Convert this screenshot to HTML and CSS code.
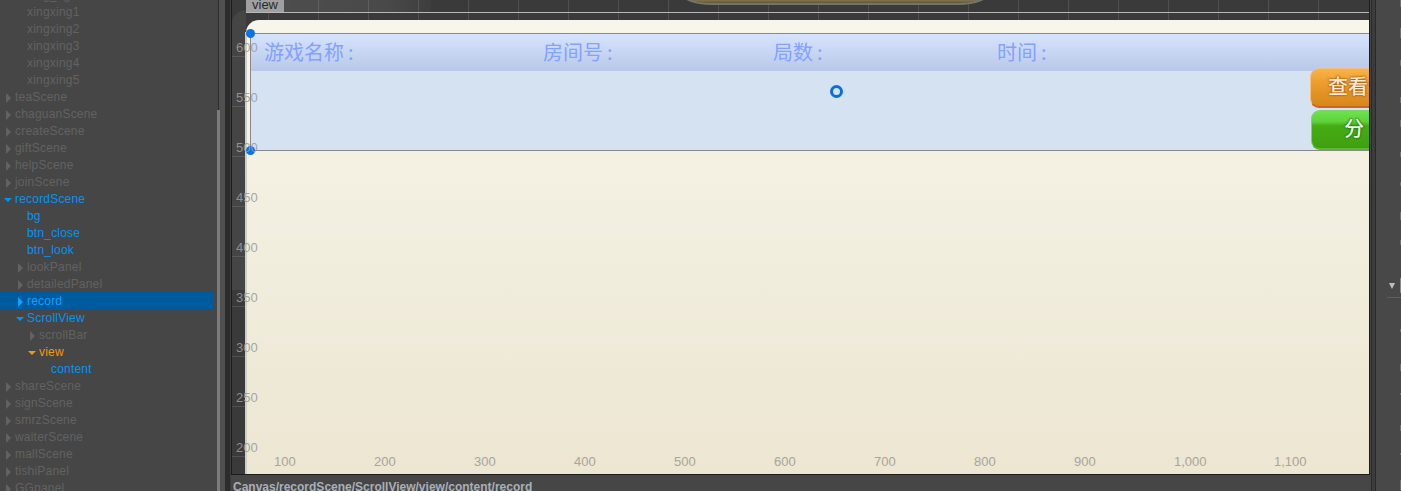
FILE: index.html
```html
<!DOCTYPE html>
<html lang="en">
<head>
  <meta charset="UTF-8" />
  <title>Scene editor</title>
  <link rel="stylesheet" href="styles.css">
</head>
<body>
  <div class="editor">

    <div class="tree-panel">
      <div class="tree">
        <div class="row dim lv1">xing_bg</div>
        <div class="row dim lv1">xingxing1</div>
        <div class="row dim lv1">xingxing2</div>
        <div class="row dim lv1">xingxing3</div>
        <div class="row dim lv1">xingxing4</div>
        <div class="row dim lv1">xingxing5</div>
        <div class="row dim lv0"><i class="arrow closed"></i>teaScene</div>
        <div class="row dim lv0"><i class="arrow closed"></i>chaguanScene</div>
        <div class="row dim lv0"><i class="arrow closed"></i>createScene</div>
        <div class="row dim lv0"><i class="arrow closed"></i>giftScene</div>
        <div class="row dim lv0"><i class="arrow closed"></i>helpScene</div>
        <div class="row dim lv0"><i class="arrow closed"></i>joinScene</div>
        <div class="row blue lv0"><i class="arrow open"></i>recordScene</div>
        <div class="row blue lv1">bg</div>
        <div class="row blue lv1">btn_close</div>
        <div class="row blue lv1">btn_look</div>
        <div class="row dim lv1"><i class="arrow closed"></i>lookPanel</div>
        <div class="row dim lv1"><i class="arrow closed"></i>detailedPanel</div>
        <div class="row blue lv1 selected"><i class="arrow closed"></i>record</div>
        <div class="row blue lv1"><i class="arrow open"></i>ScrollView</div>
        <div class="row dim lv2"><i class="arrow closed"></i>scrollBar</div>
        <div class="row orange lv2"><i class="arrow open"></i>view</div>
        <div class="row blue lv3">content</div>
        <div class="row dim lv0"><i class="arrow closed"></i>shareScene</div>
        <div class="row dim lv0"><i class="arrow closed"></i>signScene</div>
        <div class="row dim lv0"><i class="arrow closed"></i>smrzScene</div>
        <div class="row dim lv0"><i class="arrow closed"></i>waiterScene</div>
        <div class="row dim lv0"><i class="arrow closed"></i>mallScene</div>
        <div class="row dim lv0"><i class="arrow closed"></i>tishiPanel</div>
        <div class="row dim lv0"><i class="arrow closed"></i>GGpanel</div>
      </div>
      <div class="tree-scrollbar"><div class="tree-thumb"></div></div>
    </div>

    <div class="splitter left-split"></div>

    <div class="center">
      <div class="scene">
        <div class="backdrop"></div>
        <div class="gold-sprite"></div>
        <div class="view-line-h"></div>
        <div class="game-panel"></div>
        <div class="view-line-v"></div>

        <div class="record">
          <div class="record-head">
            <span>游戏名称<span class="colon">:</span></span>
            <span>房间号<span class="colon">:</span></span>
            <span>局数<span class="colon">:</span></span>
            <span>时间<span class="colon">:</span></span>
          </div>
          <div class="btn btn-look">查看详情</div>
          <div class="btn btn-share">分享</div>
        </div>

        <div class="handle handle-top"></div>
        <div class="handle handle-bottom"></div>
        <div class="pivot"></div>

        <div class="view-tag">view</div>

        <div class="axis-y">
          <span>600</span><span>550</span><span>500</span><span>450</span>
          <span>400</span><span>350</span><span>300</span><span>250</span><span>200</span>
        </div>
        <div class="axis-x">
          <span>100</span><span>200</span><span>300</span><span>400</span><span>500</span><span>600</span>
          <span>700</span><span>800</span><span>900</span><span>1,000</span><span>1,100</span>
        </div>
      </div>
      <div class="breadcrumb">Canvas/recordScene/ScrollView/view/content/record</div>
    </div>

    <div class="splitter right-split"></div>

    <div class="inspector">
      <div class="section-head"><i class="section-arrow"></i><b class="section-box"></b></div>
      <!-- left edges of the property labels, the rest is past the window -->
      <svg class="edge-marks" width="1" height="491" viewBox="0 0 1 491">
        <rect y="0" width="1" height="7" />
        <rect y="28" width="1" height="10" />
        <rect y="60" width="1" height="6" />
        <rect y="97" width="1" height="6" />
        <rect y="120" width="1" height="7" />
        <rect y="152" width="1" height="5" />
        <rect y="182" width="1" height="4" />
        <rect y="212" width="1" height="8" />
        <rect y="240" width="1" height="5" />
        <rect y="329" width="1" height="3" />
        <rect y="364" width="1" height="7" />
        <rect y="393" width="1" height="2" />
        <rect y="425" width="1" height="6" />
        <rect y="453" width="1" height="2" />
        <rect y="480" width="1" height="10" />
      </svg>
    </div>

  </div>
</body>
</html>
```

FILE: styles.css
```css
* {
  box-sizing: border-box;
}
html, body {
  margin: 0;
  padding: 0;
  height: 100%;
  overflow: hidden;
}
body {
  background: #464646;
  font-family: "Liberation Sans", Arial, sans-serif;
  font-size: 12px;
}
.editor {
  display: flex;
  width: 1401px;
  height: 491px;
  overflow: hidden;
}

/* hierarchy tree */
.tree-panel {
  display: flex;
  flex: none;
  width: 225px;
  height: 491px;
  overflow: hidden;
  background: #464646;
}
.tree {
  flex: none;
  width: 214px;
  margin-top: -14px;
}
.row {
  display: flex;
  align-items: center;
  position: relative;
  height: 17px;
  padding-top: 2px;
  line-height: 15px;
  letter-spacing: 0.2px;
  white-space: nowrap;
}
.lv0 { padding-left: 15px; }
.lv1 { padding-left: 27px; }
.lv2 { padding-left: 39px; }
.lv3 { padding-left: 51px; }
.dim { color: #626262; }
.blue { color: #0095f2; }
.orange { color: #f39a0c; }
.selected {
  background: #005a9e;
  color: #0ea0ff;
}
.arrow {
  position: absolute;
  width: 0;
  height: 0;
  border-style: solid;
  border-color: transparent;
}
.arrow.closed {
  margin-left: -9px;
  border-width: 5px 0 5px 5px;
  border-left-color: #626262;
}
.arrow.open {
  margin-left: -11px;
  border-width: 4px 4px 0 4px;
  border-top-color: #0095f2;
}
.orange .arrow.open { border-top-color: #f39a0c; }
.selected .arrow.closed { border-left-color: #0ea0ff; }
.tree-scrollbar {
  flex: none;
  width: 11px;
  padding: 110px 5px 0 3px;
  background: linear-gradient(to right, #464646 4px, #2e2e2e 4px, #2e2e2e 5px, #505050 5px);
}
.tree-thumb {
  height: 100%;
  background: #7b7b7b;
}

/* splitters */
.splitter {
  flex: none;
}
.left-split {
  width: 6px;
  background: #2c2c2c;
  border-right: 1px solid #3c3c3c;
}
.right-split {
  width: 6px;
  background: linear-gradient(to right, #464646 1px, #2a2a2a 1px, #2a2a2a 2px, #3c3c3c 2px, #3c3c3c 5px, #2a2a2a 5px);
}

/* scene view */
.center {
  flex: none;
  width: 1139px;
  height: 491px;
}
.scene {
  position: relative;
  height: 475px;
  overflow: hidden;
  border: 1px solid #1c1c1c;
  border-top: none;
  background-color: #3a3a3a;
  background-image:
    repeating-linear-gradient(to right, transparent 0, transparent 49px, #505050 49px, #505050 50px),
    repeating-linear-gradient(to bottom, transparent 0, transparent 49px, #505050 49px, #505050 50px);
  background-position: -13px 0, 0 7px;
}
.backdrop {
  position: absolute;
  left: 0;
  top: 10px;
  width: 14px;
  height: 280px;
  border-top-left-radius: 14px;
  background: rgba(255,255,255,0.06);
}
.backdrop::after {
  content: "";
  position: absolute;
  left: 14px;
  top: -10px;
  width: 185px;
  height: 12px;
  background: linear-gradient(to right, rgba(255,255,255,0.1), rgba(255,255,255,0.08) 75%, rgba(255,255,255,0.02));
}
.gold-sprite {
  position: absolute;
  left: 449px;
  top: -14px;
  width: 308px;
  height: 19px;
  border: 2px solid #74756a;
  border-top: none;
  border-radius: 0 0 30px 30px / 0 0 12px 12px;
  background: linear-gradient(to bottom, #97804f 75%, #5e5642);
}
.view-line-h {
  position: absolute;
  left: 14px;
  right: 0;
  top: 12px;
  height: 1px;
  background: #b8b8b8;
}
.view-line-v {
  position: absolute;
  left: 13px;
  top: 12px;
  bottom: 0;
  width: 2px;
  background: #cfcfc8;
  clip-path: polygon(0 20px, 100% 20px, 100% 100%, 0 100%);
}
.game-panel {
  position: absolute;
  left: 14px;
  right: 0;
  top: 20px;
  bottom: 0;
  border-top-left-radius: 13px;
  background: linear-gradient(to bottom, #f8f6ea, #f4f1e3 30%, #ece6d2);
}
.record {
  position: absolute;
  left: 18px;
  right: 0;
  top: 33px;
  height: 118px;
  border-top: 1px solid #888;
  border-bottom: 1px solid #888;
  border-left: 1px solid #888;
  background: #d5e2f2;
}
.record-head {
  display: grid;
  grid-template-columns: 279px 230px 224px 1fr;
  height: 37px;
  padding-left: 13px;
  background: linear-gradient(to bottom, #d6e3ff, #b8c8e6);
  color: #82a2ff;
  font-family: "Noto Sans CJK SC", sans-serif;
  font-size: 20px;
  line-height: 35px;
}
.colon {
  margin-left: 4px;
}
.btn {
  position: absolute;
  width: 90px;
  border-radius: 9px 0 0 9px;
  font-family: "Noto Sans CJK SC", sans-serif;
  font-size: 20px;
  font-weight: 500;
  line-height: 34px;
  white-space: nowrap;
}
.btn-look {
  left: 1059px;
  top: 34px;
  height: 40px;
  padding-left: 17px;
  border: 1px solid #f5c080;
  border-bottom: 2px solid #c8642a;
  background: linear-gradient(to bottom, #f9b346, #e99a2a 45%, #d8861a);
  color: #ffe9d0;
  text-shadow: 0 0 1px #a85a10, 0 0 2px #a85a10, 0 0 2px #a85a10;
}
.btn-share {
  left: 1060px;
  top: 76px;
  height: 40px;
  padding-left: 32px;
  border: 1px solid #7fd468;
  border-bottom: 2px solid #5cb82c;
  background: linear-gradient(to bottom, #6ee34e, #5fd23c 28%, #45ac14 40%, #3fa00f);
  color: #eefce8;
  letter-spacing: 6px;
  text-shadow: 0 0 1px #1c7408, 0 0 2px #1c7408, 0 0 2px #1c7408;
}
.handle {
  position: absolute;
  left: 14px;
  width: 9px;
  height: 9px;
  border-radius: 50%;
  background: #0a72e6;
}
.handle-top { top: 29px; }
.handle-bottom { top: 146px; }
.pivot {
  position: absolute;
  left: 598px;
  top: 85px;
  width: 13px;
  height: 13px;
  border: 3px solid #0a6fdc;
  border-radius: 50%;
}
.view-tag {
  position: absolute;
  left: 14px;
  top: 0;
  width: 38px;
  height: 12px;
  padding-left: 6px;
  background: #a0a0a0;
  color: #2b2b2b;
  font-size: 13px;
  line-height: 10px;
}
.axis-y {
  position: absolute;
  left: 4px;
  top: 23px;
  display: flex;
  flex-direction: column;
  color: rgba(155,155,155,0.9);
  font-size: 13px;
}
.axis-y span {
  height: 50px;
  line-height: 50px;
}
.axis-x {
  position: absolute;
  left: 42px;
  top: 454px;
  display: flex;
  color: #a8a59a;
  font-size: 13px;
}
.axis-x span {
  width: 100px;
}

.breadcrumb {
  height: 16px;
  padding: 5px 0 0 2px;
  color: #a9b0b8;
  font-weight: bold;
  line-height: 14px;
  white-space: nowrap;
}

/* inspector, cut off at the window edge */
.inspector {
  position: relative;
  flex: 1;
  padding-top: 278px;
  background: #484848;
  overflow: hidden;
}
.section-head {
  display: flex;
  align-items: flex-start;
  height: 20px;
  margin-left: 11px;
  border-bottom: 1px solid #5f5f5f;
}
.section-arrow {
  width: 0;
  height: 0;
  margin: 5px 5px 0 2px;
  border-style: solid;
  border-color: transparent;
  border-width: 6px 3px 0 3px;
  border-top-color: #bdbdbd;
}
.section-box {
  width: 2px;
  height: 15px;
  background: #8a8a8a;
}
.edge-marks {
  position: absolute;
  right: 0;
  top: 0;
  fill: #6e6e6e;
}
```
